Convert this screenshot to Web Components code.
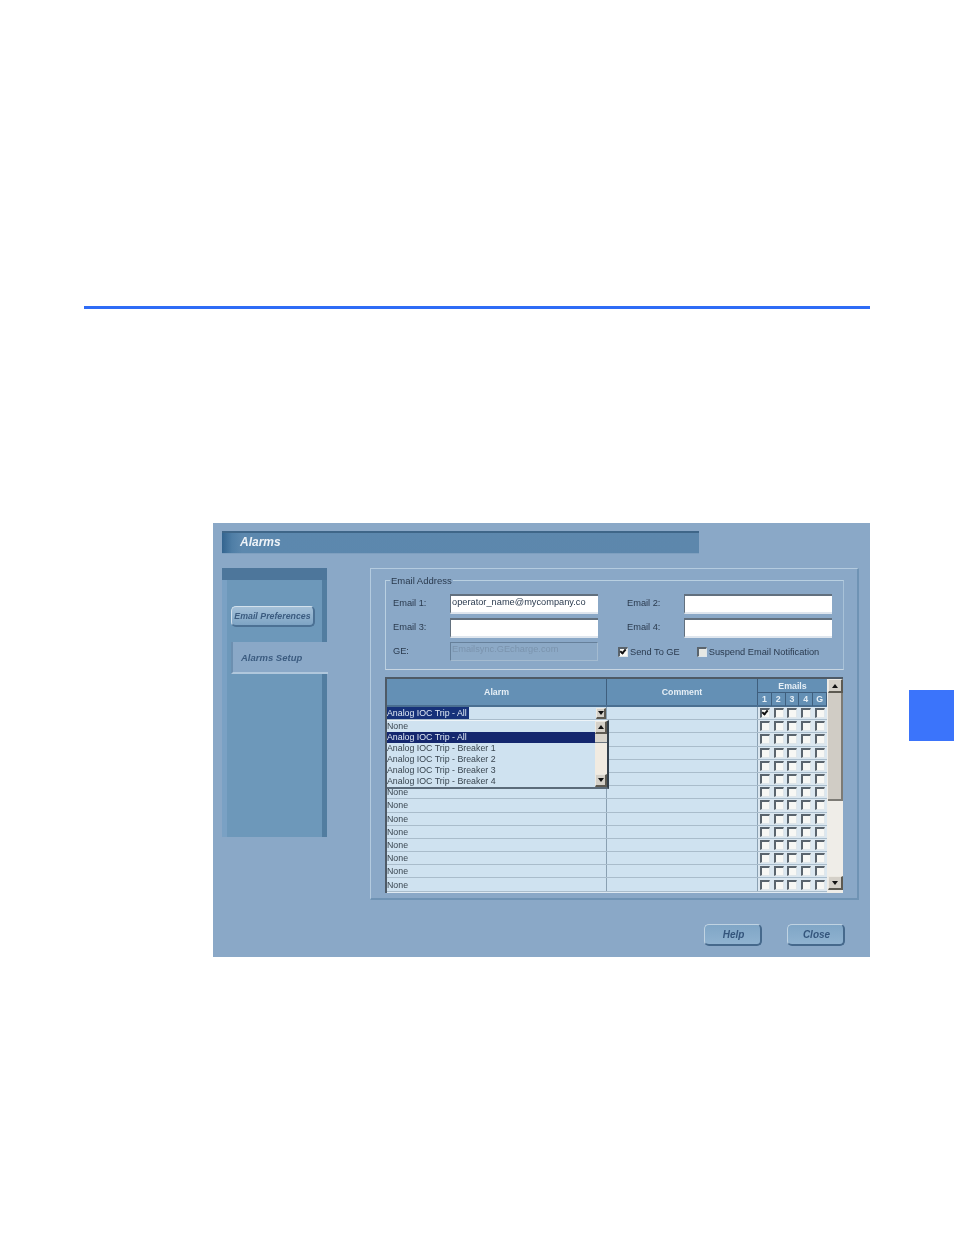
<!DOCTYPE html>
<html>
<head>
<meta charset="utf-8">
<title>Alarms</title>
<style>
    html, body { margin: 0; padding: 0; background: #fff; }
    body { font-family: 'Liberation Sans', Arial, sans-serif; }
</style>
</head>
<body>
<doc-page>
    <alarm-window></alarm-window>
</doc-page>

<script>
const boxStyle = `
    .check {
        box-sizing: border-box;
        width: 10px;
        height: 10px;
        background: #f7f7f4;
        border-top: 2px solid #5a646d;
        border-left: 2px solid #5a646d;
        border-right: 1px solid #dfe6ea;
        border-bottom: 1px solid #dfe6ea;
        position: relative;
        display: block;
    }
    .check.on::after {
        content: '';
        position: absolute;
        left: 1px;
        top: -1px;
        width: 2px;
        height: 4px;
        border: solid #111;
        border-width: 0 2px 2px 0;
        transform: rotate(40deg);
    }
`;

const arrowStyle = `
    .arrow {
        box-sizing: border-box;
        display: flex;
        align-items: center;
        justify-content: center;
        background: #d4d0c8;
        border-top: 1px solid #ece9e2;
        border-left: 1px solid #ece9e2;
        border-right: 2px solid #5d5a52;
        border-bottom: 2px solid #5d5a52;
    }
    .arrow::before {
        content: '';
        border-left: 3px solid transparent;
        border-right: 3px solid transparent;
    }
    .arrow.up::before { border-bottom: 4px solid #111; }
    .arrow.down::before { border-top: 4px solid #111; }
`;

class DocPage extends HTMLElement {
    constructor() {
        super();
        this.attachShadow({ mode: 'open' });
        this.shadowRoot.innerHTML = `
<style>
    :host {
        display: grid;
        grid-template-columns: 84px 786px 39px 45px;
        grid-template-rows: 306px 3px 214px 434px 278px;
        width: 954px;
        height: 1235px;
        background: #fff;
    }
    .rule { grid-column: 2; grid-row: 2; background: #2f6cf6; }
    .body { grid-column: 2; grid-row: 4; padding-left: 129px; }
    .tab { grid-column: 4; grid-row: 4; margin-top: 167px; height: 51px; background: #3b74fb; }
</style>
<div class="rule"></div>
<div class="body"><slot></slot></div>
<div class="tab"></div>`;
    }
}

class AlarmWindow extends HTMLElement {
    constructor() {
        super();
        this.attachShadow({ mode: 'open' });
        this.shadowRoot.innerHTML = `
<style>
    :host {
        display: block;
        box-sizing: border-box;
        width: 657px;
        height: 434px;
        padding: 8px 11px 0 9px;
        background: #8aa8c7;
        font-family: 'Liberation Sans', Arial, sans-serif;
        filter: blur(0.45px);
    }
    .title {
        box-sizing: border-box;
        width: 477px;
        height: 23px;
        padding: 0 0 2px 18px;
        display: flex;
        align-items: center;
        color: #eef3f8;
        font-size: 12px;
        font-weight: bold;
        font-style: italic;
        background: linear-gradient(90deg, #33648f 0, #4f7ea6 10px, #5c88ae 20px, #5d87ac 100%);
        border-top: 2px solid #3f6688;
        border-bottom: 1px solid #7e9fbf;
    }
    .main {
        display: flex;
        margin-top: 14px;
    }
    .buttons {
        display: flex;
        justify-content: flex-end;
        gap: 25px;
        margin-top: 24px;
        padding-right: 14px;
    }
</style>
<div class="title">Alarms</div>
<div class="main">
    <side-nav></side-nav>
    <alarm-group></alarm-group>
</div>
<div class="buttons">
    <bevel-button>Help</bevel-button>
    <bevel-button>Close</bevel-button>
</div>`;
    }
}

class SideNav extends HTMLElement {
    constructor() {
        super();
        this.attachShadow({ mode: 'open' });
        this.shadowRoot.innerHTML = `
<style>
    :host {
        display: flex;
        flex-direction: column;
        flex: none;
        width: 105px;
        height: 269px;
        margin-right: 43px;
        font-size: 9.5px;
        font-style: italic;
        font-weight: bold;
        color: #3c5c80;
    }
    .top { height: 12px; background: #4d769b; flex: none; }
    .inner {
        flex: 1;
        padding-top: 26px;
        background: #6d98ba;
        border-left: 5px solid #7aa1c4;
        border-right: 5px solid #527da0;
    }
    .pref {
        box-sizing: border-box;
        width: 84px;
        height: 21px;
        margin-left: 4px;
        display: flex;
        align-items: center;
        justify-content: center;
        white-space: nowrap;
        font-size: 8.8px;
        background: linear-gradient(#a3c0d8, #7ea4c4);
        border: 1px solid #d3e1ec;
        border-right: 2px solid #4c7194;
        border-bottom: 2px solid #4c7194;
        border-radius: 5px;
    }
    .setup {
        box-sizing: border-box;
        width: 97px;
        height: 32px;
        margin-top: 15px;
        margin-left: 4px;
        padding-left: 8px;
        display: flex;
        align-items: center;
        background: #8aa8c7;
        border-left: 2px solid #6c8fb0;
        border-bottom: 2px solid #b0c7dc;
    }
</style>
<div class="top"></div>
<div class="inner">
    <div class="pref">Email Preferences</div>
    <div class="setup">Alarms Setup</div>
</div>`;
    }
}

class AlarmGroup extends HTMLElement {
    constructor() {
        super();
        this.attachShadow({ mode: 'open' });
        this.shadowRoot.innerHTML = `
<style>
    :host {
        display: block;
        box-sizing: border-box;
        width: 489px;
        height: 332px;
        padding: 11px 14px 0;
        border-top: 1px solid #b4cbdf;
        border-left: 1px solid #b4cbdf;
        border-right: 2px solid #6f93b4;
        border-bottom: 2px solid #6f93b4;
    }
</style>
<email-form></email-form>
<alarm-table></alarm-table>`;
    }
}

class EmailForm extends HTMLElement {
    constructor() {
        super();
        this.attachShadow({ mode: 'open' });
        this.shadowRoot.innerHTML = `
<style>
    ${boxStyle}
    :host {
        display: block;
        position: relative;
        box-sizing: border-box;
        width: 459px;
        height: 90px;
        border: 1px solid #b9d0e1;
        border-right-color: #a8c2d8;
        border-bottom-color: #c8d6e2;
        font-size: 9.25px;
        color: #2a3a4e;
    }
    .legend {
        position: absolute;
        top: -6px;
        left: 4px;
        padding: 0 1px;
        background: #8aa8c7;
        line-height: 11px;
        font-size: 9.5px;
    }
    .form {
        display: grid;
        grid-template-columns: 57px 148px 29px 57px 148px;
        grid-template-rows: 20px 20px 19px;
        row-gap: 4px;
        padding: 13px 0 0 7px;
        align-items: center;
    }
    .form > span { padding-bottom: 2px; }
    .field {
        box-sizing: border-box;
        height: 20px;
        padding-left: 1px;
        background: #fff;
        border-top: 2px solid #62707e;
        border-left: 1px solid #62707e;
        border-bottom: 2px solid #dfe6ee;
        line-height: 13px;
        white-space: nowrap;
        overflow: hidden;
        color: #2a3a4e;
    }
    .field.off {
        height: 19px;
        background: #8ca9c6;
        color: #7b94ae;
        border: 1px solid #66809a;
        border-bottom-color: #a4bbd0;
        border-right-color: #a4bbd0;
    }
    .opts {
        grid-column: 3 / 6;
        display: flex;
        align-items: center;
        padding-left: 20px;
        white-space: nowrap;
    }
    .opts .check { margin-right: 2px; }
    .opts .second { margin-left: 17px; background: #e6e8e4; }
</style>
<div class="legend">Email Address</div>
<div class="form">
    <span>Email 1:</span>
    <div class="field">operator_name@mycompany.co</div>
    <span></span>
    <span>Email 2:</span>
    <div class="field"></div>
    <span>Email 3:</span>
    <div class="field"></div>
    <span></span>
    <span>Email 4:</span>
    <div class="field"></div>
    <span>GE:</span>
    <div class="field off">Emailsync.GEcharge.com</div>
    <div class="opts">
        <i class="check on"></i><span>Send To GE</span>
        <i class="check second"></i><span>Suspend Email Notification</span>
    </div>
</div>`;
    }
}

class AlarmTable extends HTMLElement {
    constructor() {
        super();
        this.attachShadow({ mode: 'open' });
        let rows = '';
        for (let i = 0; i < 14; i++) {
            // rows 1-5 sit under the open dropdown
            let label = i >= 6 ? 'None' : '';
            if (i === 0) label = '<span class="sel">Analog IOC Trip - All</span><i class="arrow down combo"></i>';
            let boxes = '';
            for (let n = 0; n < 5; n++) {
                boxes += `<i class="check${i === 0 && n === 0 ? ' on' : ''}"></i>`;
            }
            rows += `<div class="row"><div class="c1">${label}</div><div class="c2"></div><div class="c3">${boxes}</div></div>`;
        }
        this.shadowRoot.innerHTML = `
<style>
    ${boxStyle}
    ${arrowStyle}
    :host {
        display: block;
        position: relative;
        box-sizing: border-box;
        width: 458px;
        height: 216px;
        margin-top: 7px;
        overflow: hidden;
        border-top: 2px solid #4e5a66;
        border-left: 2px solid #4e5a66;
        background: #dfe9f1;
        font-size: 8.8px;
        color: #39454f;
    }
    .wrap { display: flex; height: 100%; }
    .grid { width: 440px; flex: none; }
    .head {
        display: grid;
        grid-template-columns: 220px 151px 69px;
        height: 26px;
        background: #6490b5;
        border-bottom: 2px solid #4a6f91;
        color: #e6eff6;
        font-weight: bold;
    }
    .head > div { display: flex; align-items: center; justify-content: center; border-right: 1px solid #3f5f7e; }
    .head .emails { display: block; border-right: 0; }
    .emails .top { height: 13px; line-height: 15px; text-align: center; border-bottom: 1px solid #3f5f7e; }
    .nums { display: grid; grid-template-columns: repeat(5, 1fr); height: 12px; line-height: 13px; text-align: center; }
    .nums span { border-right: 1px solid #3f5f7e; }
    .row {
        box-sizing: border-box;
        display: grid;
        grid-template-columns: 220px 151px 69px;
        height: 13.2px;
        line-height: 12px;
        background: #cfe2f0;
        border-bottom: 1px solid #a9bccb;
    }
    .c1 { border-right: 1px solid #8aa0b2; display: flex; justify-content: space-between; align-items: center; }
    .c2 { border-right: 1px solid #8aa0b2; }
    .c3 { display: grid; grid-template-columns: repeat(5, 1fr); justify-items: center; align-items: center; background: #dbe7f0; }
    .sel { background: #16327a; color: #dfe9f4; padding-right: 2px; }
    .combo { width: 10px; height: 11px; }
    .bar {
        flex: none;
        width: 15px;
        padding-left: 1px;
        display: flex;
        flex-direction: column;
        background: #efede8;
    }
    .bar .arrow { height: 14px; flex: none; }
    .thumb {
        box-sizing: border-box;
        height: 108px;
        background: #d0ccc5;
        border-right: 2px solid #7d7b75;
        border-bottom: 2px solid #7d7b75;
    }
    .gap { flex: 1; }
</style>
<div class="wrap">
    <div class="grid">
        <div class="head">
            <div>Alarm</div>
            <div>Comment</div>
            <div class="emails">
                <div class="top">Emails</div>
                <div class="nums"><span>1</span><span>2</span><span>3</span><span>4</span><span>G</span></div>
            </div>
        </div>
        ${rows}
    </div>
    <div class="bar">
        <i class="arrow up"></i>
        <div class="thumb"></div>
        <div class="gap"></div>
        <i class="arrow down"></i>
        <div style="height:3px"></div>
    </div>
</div>
<alarm-list></alarm-list>`;
    }
}

// open dropdown lying over the first rows of the table
class AlarmList extends HTMLElement {
    constructor() {
        super();
        this.attachShadow({ mode: 'open' });
        const items = ['None', 'Analog IOC Trip - All', 'Analog IOC Trip - Breaker 1', 'Analog IOC Trip - Breaker 2',
            'Analog IOC Trip - Breaker 3', 'Analog IOC Trip - Breaker 4'];
        this.shadowRoot.innerHTML = `
<style>
    ${arrowStyle}
    :host {
        position: absolute;
        left: 0;
        top: 41px;
        box-sizing: border-box;
        width: 222px;
        height: 69px;
        display: flex;
        background: #cfe2f0;
        border-top: 1px solid #eef4f8;
        border-right: 2px solid #33404c;
        border-bottom: 2px solid #5b6b7a;
        font-size: 8.8px;
        color: #39454f;
    }
    .items { flex: 1; }
    .items div { height: 11px; line-height: 11px; white-space: nowrap; }
    .items .on { background: #14276e; color: #dfe9f4; }
    .bar { width: 12px; display: flex; flex-direction: column; background: #f1ebe1; }
    .bar .arrow { height: 13px; flex: none; }
    .thumb { height: 8px; background: #d8d4cb; border-bottom: 1px solid #6c7680; }
    .gap { flex: 1; }
</style>
<div class="items">${items.map(t => `<div class="${t.endsWith('All') ? 'on' : ''}">${t}</div>`).join('')}</div>
<div class="bar">
    <i class="arrow up"></i>
    <div class="thumb"></div>
    <div class="gap"></div>
    <i class="arrow down"></i>
</div>`;
    }
}

class BevelButton extends HTMLElement {
    constructor() {
        super();
        this.attachShadow({ mode: 'open' });
        this.shadowRoot.innerHTML = `
<style>
    :host {
        display: flex;
        box-sizing: border-box;
        width: 58px;
        height: 22px;
        padding-left: 2px;
        align-items: center;
        justify-content: center;
        background: linear-gradient(#80a6c6, #8fb2d0);
        border: 1px solid #c0d3e2;
        border-right: 2px solid #46698c;
        border-bottom: 2px solid #46698c;
        border-radius: 5px;
        color: #34557c;
        font-size: 10px;
        font-weight: bold;
        font-style: italic;
    }
</style>
<slot></slot>`;
    }
}

customElements.define('doc-page', DocPage);
customElements.define('alarm-window', AlarmWindow);
customElements.define('side-nav', SideNav);
customElements.define('alarm-group', AlarmGroup);
customElements.define('email-form', EmailForm);
customElements.define('alarm-table', AlarmTable);
customElements.define('alarm-list', AlarmList);
customElements.define('bevel-button', BevelButton);
</script>
</body>
</html>
